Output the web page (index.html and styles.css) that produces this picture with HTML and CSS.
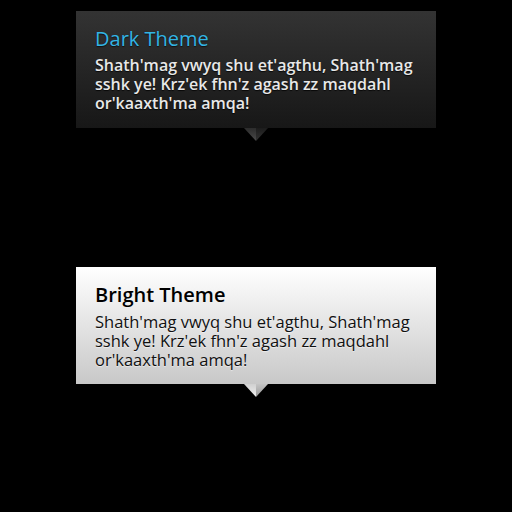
FILE: index.html
```html
<!DOCTYPE html>
<html>
<head>
<meta charset="utf-8">
<link rel="stylesheet" href="styles.css">
</head>
<body>
<div class="page">
  <div class="tip tip-dark">
    <div class="title">Dark Theme</div>
    <div class="text">Shath'mag vwyq shu et'agthu, Shath'mag sshk ye! Krz'ek fhn'z agash zz maqdahl or'kaaxth'ma amqa!</div>
    <svg class="arrow" width="24" height="13" viewBox="0 0 24 13">
      <defs>
        <linearGradient id="dl" x1="0" y1="0" x2="0" y2="1"><stop offset="0" stop-color="#2c2c2c"/><stop offset="1" stop-color="#4a4a4a"/></linearGradient>
        <linearGradient id="dr" x1="0" y1="0" x2="0" y2="1"><stop offset="0" stop-color="#1c1c1c"/><stop offset="1" stop-color="#333"/></linearGradient>
      </defs>
      <polygon points="0,0 12,0 12,13" fill="url(#dl)"/>
      <polygon points="12,0 24,0 12,13" fill="url(#dr)"/>
    </svg>
  </div>
  <div class="tip tip-bright">
    <div class="title">Bright Theme</div>
    <div class="text">Shath'mag vwyq shu et'agthu, Shath'mag sshk ye! Krz'ek fhn'z agash zz maqdahl or'kaaxth'ma amqa!</div>
    <svg class="arrow" width="24" height="13" viewBox="0 0 24 13">
      <defs>
        <linearGradient id="bl" x1="0" y1="0" x2="0" y2="1"><stop offset="0" stop-color="#d0d0d0"/><stop offset="1" stop-color="#f0f0f0"/></linearGradient>
        <linearGradient id="br" x1="0" y1="0" x2="0" y2="1"><stop offset="0" stop-color="#c4c4c4"/><stop offset="1" stop-color="#9a9a9a"/></linearGradient>
      </defs>
      <polygon points="0,0 12,0 12,13" fill="url(#bl)"/>
      <polygon points="12,0 24,0 12,13" fill="url(#br)"/>
    </svg>
  </div>
</div>
</body>
</html>
```
FILE: styles.css
```css
html, body {
  margin: 0;
  padding: 0;
  background: #000;
  width: 512px;
  height: 512px;
  overflow: hidden;
}
.page {
  display: flex;
  flex-direction: column;
  align-items: center;
  padding-top: 11px;
  gap: 139px;
  font-family: "Open Sans", "DejaVu Sans", sans-serif;
}
.tip {
  position: relative;
  box-sizing: border-box;
  width: 360px;
  height: 117px;
  padding: 15px 18px 14px 19px;
}
.title {
  font-size: 20px;
  line-height: 25px;
  margin-bottom: 5px;
}
.text {
  font-size: 16.5px;
  line-height: 19px;
}
.arrow {
  position: absolute;
  left: 168px;
  top: 100%;
  display: block;
}
.tip-dark {
  background: linear-gradient(to bottom, #333333, #171717);
}
.tip-dark .title {
  color: #33b5e5;
  text-shadow: 0 1px 1px rgba(0,0,0,0.6);
}
.tip-dark .text {
  color: #e8e8e8;
  font-size: 16px;
  font-weight: 600;
  text-shadow: 0 1px 1px rgba(0,0,0,0.8);
}
.tip-bright {
  background: linear-gradient(to bottom, #ffffff, #c8c8c8);
}
.tip-bright .title {
  color: #000;
  font-weight: 600;
}
.tip-bright .text {
  color: #111;
  text-shadow: 0 1px 1px rgba(255,255,255,0.6);
}
```
